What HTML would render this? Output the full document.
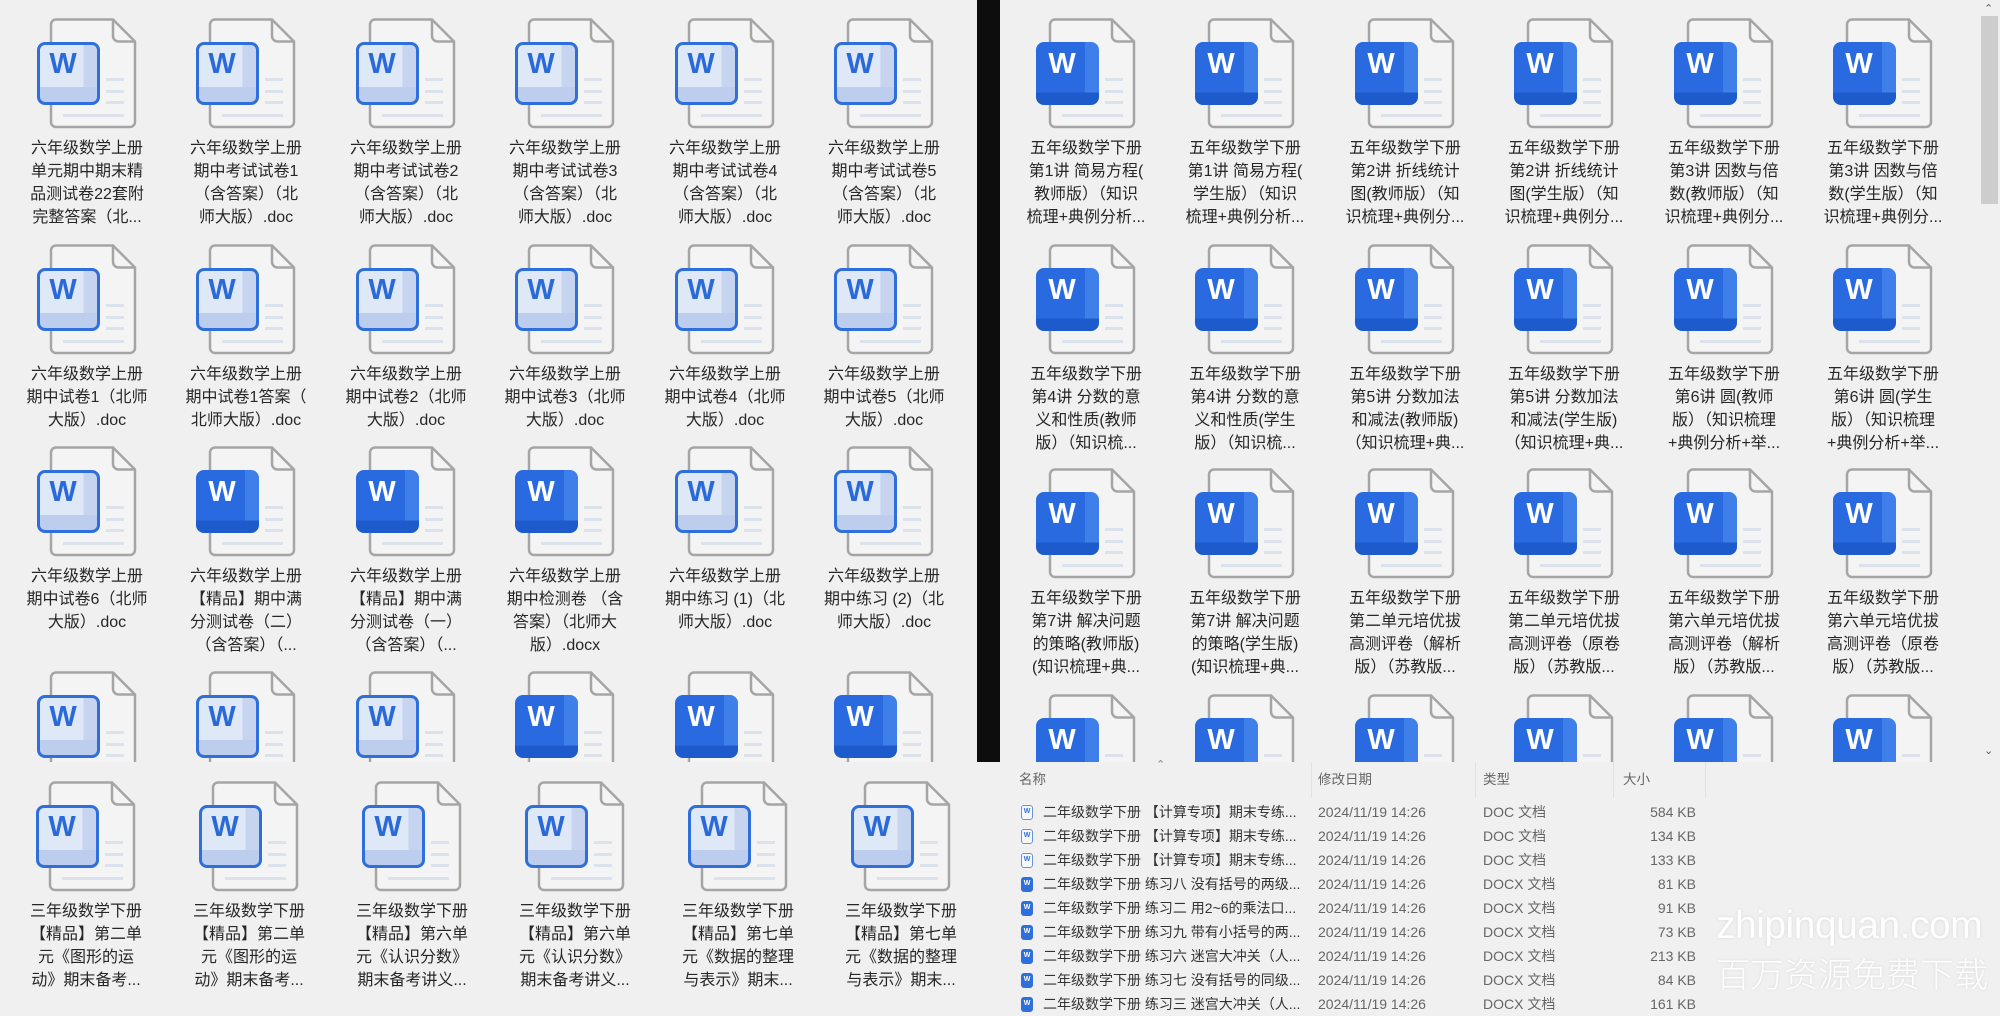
<!DOCTYPE html>
<html><head><meta charset="utf-8">
<style>
*{margin:0;padding:0;box-sizing:border-box}
body{width:2000px;height:1000px;overflow:hidden;background:#f0f0f0;font-family:"Liberation Sans","Noto Sans CJK SC",sans-serif;position:relative}
.p{position:absolute;overflow:hidden;background:#f0f0f0}
.it{position:absolute;width:160px;height:230px}
.ic{position:absolute;left:30px;top:0;width:100px;height:112px}
.ic svg{position:absolute;left:0;top:0}
.sq{position:absolute;left:0;top:24px;width:63px;height:63px;border-radius:8px;overflow:hidden}
.sq b{position:absolute;left:0;top:6px;width:52px;text-align:center;font:bold 29px "Liberation Sans",sans-serif}
.L{border:3px solid #2e6fdc;background:linear-gradient(to bottom,rgba(0,0,0,0) 74%,#bccdee 74%),linear-gradient(to right,#dfe8f7 76%,#c6d4f0 76%)}
.L b{color:#2a6ad8;top:3px;left:-3px}
.S{background:linear-gradient(to bottom,rgba(0,0,0,0) 80%,#1d5bcc 80%),linear-gradient(to right,#2a6ae0 78%,#3f7fe9 78%)}
.S b{color:#fff}
.t{position:absolute;left:0;top:119px;width:160px;text-align:center;font-size:16px;line-height:23px;color:#262626;white-space:nowrap;font-family:"Liberation Sans","Noto Sans CJK SC",sans-serif}
.hd{position:absolute;top:768px;font-size:13.5px;color:#666;font-family:"Liberation Sans","Noto Sans CJK SC",sans-serif}
.sep{position:absolute;top:762px;width:1px;height:36px;background:#e2e2e2}
.r{position:absolute;left:1000px;width:720px;height:24px;font-size:14px;line-height:24px;color:#333;font-family:"Liberation Sans","Noto Sans CJK SC",sans-serif}
.r span{position:absolute;white-space:nowrap}
.r .n{left:43px}.r .d{left:318px;color:#666}.r .y{left:483px;color:#666}.r .z{right:24px;color:#666;text-align:right}
.si{position:absolute;left:21px;top:5px;width:12px;height:15px;border:1.5px solid #6b93d8;border-radius:3px;background:#f6f8fc;font:bold 7px/12px "Liberation Sans",sans-serif;color:#2e6fdc;text-align:center;font-style:normal}
.si.x{background:#2e6fdc;border-color:#2e6fdc;color:#fff}
</style></head><body>
<svg width="0" height="0" style="position:absolute"><defs><symbol id="dc" viewBox="0 0 100 112"><path d="M19 1.5H76L98 23.5V104a5 5 0 0 1-5 5H19a5 5 0 0 1-5-5V6.5a5 5 0 0 1 5-5Z" fill="#f4f4f4" stroke="#a5a5a5" stroke-width="2.5"/><path d="M76 1.5V18a5.5 5.5 0 0 0 5.5 5.5H98" fill="none" stroke="#a5a5a5" stroke-width="2.5"/><rect x="69" y="60" width="18" height="3" fill="#dce2ec"/><rect x="69" y="72" width="18" height="3" fill="#dce2ec"/><rect x="69" y="83" width="18" height="3" fill="#dce2ec"/><rect x="26" y="96" width="61" height="3" fill="#dce2ec"/></symbol></defs></svg>

<!-- LEFT TOP PANEL -->
<div class="p" style="left:0;top:0;width:977px;height:762px">
<div class="it" style="left:7px;top:18px"><div class="ic"><svg width="100" height="112"><use href="#dc"/></svg><div class="sq L"><b>W</b></div></div><div class="t">六年级数学上册<br>单元期中期末精<br>品测试卷22套附<br>完整答案（北...</div></div>
<div class="it" style="left:166px;top:18px"><div class="ic"><svg width="100" height="112"><use href="#dc"/></svg><div class="sq L"><b>W</b></div></div><div class="t">六年级数学上册<br>期中考试试卷1<br>（含答案）（北<br>师大版）.doc</div></div>
<div class="it" style="left:326px;top:18px"><div class="ic"><svg width="100" height="112"><use href="#dc"/></svg><div class="sq L"><b>W</b></div></div><div class="t">六年级数学上册<br>期中考试试卷2<br>（含答案）（北<br>师大版）.doc</div></div>
<div class="it" style="left:485px;top:18px"><div class="ic"><svg width="100" height="112"><use href="#dc"/></svg><div class="sq L"><b>W</b></div></div><div class="t">六年级数学上册<br>期中考试试卷3<br>（含答案）（北<br>师大版）.doc</div></div>
<div class="it" style="left:645px;top:18px"><div class="ic"><svg width="100" height="112"><use href="#dc"/></svg><div class="sq L"><b>W</b></div></div><div class="t">六年级数学上册<br>期中考试试卷4<br>（含答案）（北<br>师大版）.doc</div></div>
<div class="it" style="left:804px;top:18px"><div class="ic"><svg width="100" height="112"><use href="#dc"/></svg><div class="sq L"><b>W</b></div></div><div class="t">六年级数学上册<br>期中考试试卷5<br>（含答案）（北<br>师大版）.doc</div></div>
<div class="it" style="left:7px;top:244px"><div class="ic"><svg width="100" height="112"><use href="#dc"/></svg><div class="sq L"><b>W</b></div></div><div class="t">六年级数学上册<br>期中试卷1（北师<br>大版）.doc</div></div>
<div class="it" style="left:166px;top:244px"><div class="ic"><svg width="100" height="112"><use href="#dc"/></svg><div class="sq L"><b>W</b></div></div><div class="t">六年级数学上册<br>期中试卷1答案（<br>北师大版）.doc</div></div>
<div class="it" style="left:326px;top:244px"><div class="ic"><svg width="100" height="112"><use href="#dc"/></svg><div class="sq L"><b>W</b></div></div><div class="t">六年级数学上册<br>期中试卷2（北师<br>大版）.doc</div></div>
<div class="it" style="left:485px;top:244px"><div class="ic"><svg width="100" height="112"><use href="#dc"/></svg><div class="sq L"><b>W</b></div></div><div class="t">六年级数学上册<br>期中试卷3（北师<br>大版）.doc</div></div>
<div class="it" style="left:645px;top:244px"><div class="ic"><svg width="100" height="112"><use href="#dc"/></svg><div class="sq L"><b>W</b></div></div><div class="t">六年级数学上册<br>期中试卷4（北师<br>大版）.doc</div></div>
<div class="it" style="left:804px;top:244px"><div class="ic"><svg width="100" height="112"><use href="#dc"/></svg><div class="sq L"><b>W</b></div></div><div class="t">六年级数学上册<br>期中试卷5（北师<br>大版）.doc</div></div>
<div class="it" style="left:7px;top:446px"><div class="ic"><svg width="100" height="112"><use href="#dc"/></svg><div class="sq L"><b>W</b></div></div><div class="t">六年级数学上册<br>期中试卷6（北师<br>大版）.doc</div></div>
<div class="it" style="left:166px;top:446px"><div class="ic"><svg width="100" height="112"><use href="#dc"/></svg><div class="sq S"><b>W</b></div></div><div class="t">六年级数学上册<br>【精品】期中满<br>分测试卷（二）<br>（含答案）（...</div></div>
<div class="it" style="left:326px;top:446px"><div class="ic"><svg width="100" height="112"><use href="#dc"/></svg><div class="sq S"><b>W</b></div></div><div class="t">六年级数学上册<br>【精品】期中满<br>分测试卷（一）<br>（含答案）（...</div></div>
<div class="it" style="left:485px;top:446px"><div class="ic"><svg width="100" height="112"><use href="#dc"/></svg><div class="sq S"><b>W</b></div></div><div class="t">六年级数学上册<br>期中检测卷 （含<br>答案）（北师大<br>版）.docx</div></div>
<div class="it" style="left:645px;top:446px"><div class="ic"><svg width="100" height="112"><use href="#dc"/></svg><div class="sq L"><b>W</b></div></div><div class="t">六年级数学上册<br>期中练习 (1)（北<br>师大版）.doc</div></div>
<div class="it" style="left:804px;top:446px"><div class="ic"><svg width="100" height="112"><use href="#dc"/></svg><div class="sq L"><b>W</b></div></div><div class="t">六年级数学上册<br>期中练习 (2)（北<br>师大版）.doc</div></div>
<div class="it" style="left:7px;top:671px"><div class="ic"><svg width="100" height="112"><use href="#dc"/></svg><div class="sq L"><b>W</b></div></div></div>
<div class="it" style="left:166px;top:671px"><div class="ic"><svg width="100" height="112"><use href="#dc"/></svg><div class="sq L"><b>W</b></div></div></div>
<div class="it" style="left:326px;top:671px"><div class="ic"><svg width="100" height="112"><use href="#dc"/></svg><div class="sq L"><b>W</b></div></div></div>
<div class="it" style="left:485px;top:671px"><div class="ic"><svg width="100" height="112"><use href="#dc"/></svg><div class="sq S"><b>W</b></div></div></div>
<div class="it" style="left:645px;top:671px"><div class="ic"><svg width="100" height="112"><use href="#dc"/></svg><div class="sq S"><b>W</b></div></div></div>
<div class="it" style="left:804px;top:671px"><div class="ic"><svg width="100" height="112"><use href="#dc"/></svg><div class="sq S"><b>W</b></div></div></div>
</div>

<div style="position:absolute;left:977px;top:0;width:23px;height:762px;background:#0d0d0d"></div>

<!-- RIGHT TOP PANEL -->
<div class="p" style="left:1000px;top:0;width:1000px;height:762px">
<div class="it" style="left:6px;top:18px"><div class="ic"><svg width="100" height="112"><use href="#dc"/></svg><div class="sq S"><b>W</b></div></div><div class="t">五年级数学下册<br>第1讲 简易方程(<br>教师版）（知识<br>梳理+典例分析...</div></div>
<div class="it" style="left:165px;top:18px"><div class="ic"><svg width="100" height="112"><use href="#dc"/></svg><div class="sq S"><b>W</b></div></div><div class="t">五年级数学下册<br>第1讲 简易方程(<br>学生版）（知识<br>梳理+典例分析...</div></div>
<div class="it" style="left:325px;top:18px"><div class="ic"><svg width="100" height="112"><use href="#dc"/></svg><div class="sq S"><b>W</b></div></div><div class="t">五年级数学下册<br>第2讲 折线统计<br>图(教师版）（知<br>识梳理+典例分...</div></div>
<div class="it" style="left:484px;top:18px"><div class="ic"><svg width="100" height="112"><use href="#dc"/></svg><div class="sq S"><b>W</b></div></div><div class="t">五年级数学下册<br>第2讲 折线统计<br>图(学生版）（知<br>识梳理+典例分...</div></div>
<div class="it" style="left:644px;top:18px"><div class="ic"><svg width="100" height="112"><use href="#dc"/></svg><div class="sq S"><b>W</b></div></div><div class="t">五年级数学下册<br>第3讲 因数与倍<br>数(教师版）（知<br>识梳理+典例分...</div></div>
<div class="it" style="left:803px;top:18px"><div class="ic"><svg width="100" height="112"><use href="#dc"/></svg><div class="sq S"><b>W</b></div></div><div class="t">五年级数学下册<br>第3讲 因数与倍<br>数(学生版）（知<br>识梳理+典例分...</div></div>
<div class="it" style="left:6px;top:244px"><div class="ic"><svg width="100" height="112"><use href="#dc"/></svg><div class="sq S"><b>W</b></div></div><div class="t">五年级数学下册<br>第4讲 分数的意<br>义和性质(教师<br>版）（知识梳...</div></div>
<div class="it" style="left:165px;top:244px"><div class="ic"><svg width="100" height="112"><use href="#dc"/></svg><div class="sq S"><b>W</b></div></div><div class="t">五年级数学下册<br>第4讲 分数的意<br>义和性质(学生<br>版）（知识梳...</div></div>
<div class="it" style="left:325px;top:244px"><div class="ic"><svg width="100" height="112"><use href="#dc"/></svg><div class="sq S"><b>W</b></div></div><div class="t">五年级数学下册<br>第5讲 分数加法<br>和减法(教师版)<br>（知识梳理+典...</div></div>
<div class="it" style="left:484px;top:244px"><div class="ic"><svg width="100" height="112"><use href="#dc"/></svg><div class="sq S"><b>W</b></div></div><div class="t">五年级数学下册<br>第5讲 分数加法<br>和减法(学生版)<br>（知识梳理+典...</div></div>
<div class="it" style="left:644px;top:244px"><div class="ic"><svg width="100" height="112"><use href="#dc"/></svg><div class="sq S"><b>W</b></div></div><div class="t">五年级数学下册<br>第6讲 圆(教师<br>版）（知识梳理<br>+典例分析+举...</div></div>
<div class="it" style="left:803px;top:244px"><div class="ic"><svg width="100" height="112"><use href="#dc"/></svg><div class="sq S"><b>W</b></div></div><div class="t">五年级数学下册<br>第6讲 圆(学生<br>版）（知识梳理<br>+典例分析+举...</div></div>
<div class="it" style="left:6px;top:468px"><div class="ic"><svg width="100" height="112"><use href="#dc"/></svg><div class="sq S"><b>W</b></div></div><div class="t">五年级数学下册<br>第7讲 解决问题<br>的策略(教师版)<br>(知识梳理+典...</div></div>
<div class="it" style="left:165px;top:468px"><div class="ic"><svg width="100" height="112"><use href="#dc"/></svg><div class="sq S"><b>W</b></div></div><div class="t">五年级数学下册<br>第7讲 解决问题<br>的策略(学生版)<br>(知识梳理+典...</div></div>
<div class="it" style="left:325px;top:468px"><div class="ic"><svg width="100" height="112"><use href="#dc"/></svg><div class="sq S"><b>W</b></div></div><div class="t">五年级数学下册<br>第二单元培优拔<br>高测评卷（解析<br>版）（苏教版...</div></div>
<div class="it" style="left:484px;top:468px"><div class="ic"><svg width="100" height="112"><use href="#dc"/></svg><div class="sq S"><b>W</b></div></div><div class="t">五年级数学下册<br>第二单元培优拔<br>高测评卷（原卷<br>版）（苏教版...</div></div>
<div class="it" style="left:644px;top:468px"><div class="ic"><svg width="100" height="112"><use href="#dc"/></svg><div class="sq S"><b>W</b></div></div><div class="t">五年级数学下册<br>第六单元培优拔<br>高测评卷（解析<br>版）（苏教版...</div></div>
<div class="it" style="left:803px;top:468px"><div class="ic"><svg width="100" height="112"><use href="#dc"/></svg><div class="sq S"><b>W</b></div></div><div class="t">五年级数学下册<br>第六单元培优拔<br>高测评卷（原卷<br>版）（苏教版...</div></div>
<div class="it" style="left:6px;top:694px"><div class="ic"><svg width="100" height="112"><use href="#dc"/></svg><div class="sq S"><b>W</b></div></div></div>
<div class="it" style="left:165px;top:694px"><div class="ic"><svg width="100" height="112"><use href="#dc"/></svg><div class="sq S"><b>W</b></div></div></div>
<div class="it" style="left:325px;top:694px"><div class="ic"><svg width="100" height="112"><use href="#dc"/></svg><div class="sq S"><b>W</b></div></div></div>
<div class="it" style="left:484px;top:694px"><div class="ic"><svg width="100" height="112"><use href="#dc"/></svg><div class="sq S"><b>W</b></div></div></div>
<div class="it" style="left:644px;top:694px"><div class="ic"><svg width="100" height="112"><use href="#dc"/></svg><div class="sq S"><b>W</b></div></div></div>
<div class="it" style="left:803px;top:694px"><div class="ic"><svg width="100" height="112"><use href="#dc"/></svg><div class="sq S"><b>W</b></div></div></div>
<div style="position:absolute;left:979px;top:0;width:21px;height:762px;background:#f0f0f0"></div>
<div style="position:absolute;left:981px;top:16px;width:17px;height:188px;background:#cdcdcd"></div>
<div style="position:absolute;left:984px;top:2px;font-size:11px;color:#606060">&#8963;</div>
<div style="position:absolute;left:984px;top:744px;font-size:11px;color:#606060">&#8964;</div>
</div>

<!-- BOTTOM LEFT -->
<div class="p" style="left:0;top:762px;width:1000px;height:238px">
<div class="it" style="left:6px;top:19px"><div class="ic"><svg width="100" height="112"><use href="#dc"/></svg><div class="sq L"><b>W</b></div></div><div class="t">三年级数学下册<br>【精品】第二单<br>元《图形的运<br>动》期末备考...</div></div>
<div class="it" style="left:169px;top:19px"><div class="ic"><svg width="100" height="112"><use href="#dc"/></svg><div class="sq L"><b>W</b></div></div><div class="t">三年级数学下册<br>【精品】第二单<br>元《图形的运<br>动》期末备考...</div></div>
<div class="it" style="left:332px;top:19px"><div class="ic"><svg width="100" height="112"><use href="#dc"/></svg><div class="sq L"><b>W</b></div></div><div class="t">三年级数学下册<br>【精品】第六单<br>元《认识分数》<br>期末备考讲义...</div></div>
<div class="it" style="left:495px;top:19px"><div class="ic"><svg width="100" height="112"><use href="#dc"/></svg><div class="sq L"><b>W</b></div></div><div class="t">三年级数学下册<br>【精品】第六单<br>元《认识分数》<br>期末备考讲义...</div></div>
<div class="it" style="left:658px;top:19px"><div class="ic"><svg width="100" height="112"><use href="#dc"/></svg><div class="sq L"><b>W</b></div></div><div class="t">三年级数学下册<br>【精品】第七单<br>元《数据的整理<br>与表示》期末...</div></div>
<div class="it" style="left:821px;top:19px"><div class="ic"><svg width="100" height="112"><use href="#dc"/></svg><div class="sq L"><b>W</b></div></div><div class="t">三年级数学下册<br>【精品】第七单<br>元《数据的整理<br>与表示》期末...</div></div>
</div>

<!-- BOTTOM RIGHT LIST -->
<div class="p" style="left:1000px;top:762px;width:1000px;height:238px"></div>
<div style="position:absolute;left:1156px;top:758px;font-size:11px;color:#888">&#8963;</div>
<div class="hd" style="left:1019px">名称</div>
<div class="hd" style="left:1318px">修改日期</div>
<div class="hd" style="left:1483px">类型</div>
<div class="hd" style="left:1623px">大小</div>
<div class="sep" style="left:1311px"></div><div class="sep" style="left:1475px"></div><div class="sep" style="left:1613px"></div><div class="sep" style="left:1705px"></div>

<div class="r" style="top:800px"><i class="si">W</i><span class="n">二年级数学下册 【计算专项】期末专练...</span><span class="d">2024/11/19 14:26</span><span class="y">DOC 文档</span><span class="z">584 KB</span></div>
<div class="r" style="top:824px"><i class="si">W</i><span class="n">二年级数学下册 【计算专项】期末专练...</span><span class="d">2024/11/19 14:26</span><span class="y">DOC 文档</span><span class="z">134 KB</span></div>
<div class="r" style="top:848px"><i class="si">W</i><span class="n">二年级数学下册 【计算专项】期末专练...</span><span class="d">2024/11/19 14:26</span><span class="y">DOC 文档</span><span class="z">133 KB</span></div>
<div class="r" style="top:872px"><i class="si x">W</i><span class="n">二年级数学下册 练习八 没有括号的两级...</span><span class="d">2024/11/19 14:26</span><span class="y">DOCX 文档</span><span class="z">81 KB</span></div>
<div class="r" style="top:896px"><i class="si x">W</i><span class="n">二年级数学下册 练习二 用2~6的乘法口...</span><span class="d">2024/11/19 14:26</span><span class="y">DOCX 文档</span><span class="z">91 KB</span></div>
<div class="r" style="top:920px"><i class="si x">W</i><span class="n">二年级数学下册 练习九 带有小括号的两...</span><span class="d">2024/11/19 14:26</span><span class="y">DOCX 文档</span><span class="z">73 KB</span></div>
<div class="r" style="top:944px"><i class="si x">W</i><span class="n">二年级数学下册 练习六 迷宫大冲关（人...</span><span class="d">2024/11/19 14:26</span><span class="y">DOCX 文档</span><span class="z">213 KB</span></div>
<div class="r" style="top:968px"><i class="si x">W</i><span class="n">二年级数学下册 练习七 没有括号的同级...</span><span class="d">2024/11/19 14:26</span><span class="y">DOCX 文档</span><span class="z">84 KB</span></div>
<div class="r" style="top:992px"><i class="si x">W</i><span class="n">二年级数学下册 练习三 迷宫大冲关（人...</span><span class="d">2024/11/19 14:26</span><span class="y">DOCX 文档</span><span class="z">161 KB</span></div>

<div style="position:absolute;left:1716px;top:903px;font-size:39px;line-height:46px;color:rgba(255,255,255,0.95);font-family:'Liberation Sans',sans-serif;letter-spacing:-0.5px;white-space:nowrap;text-shadow:0 0 3px rgba(0,0,0,0.1)">zhipinquan.com</div>
<div style="position:absolute;left:1716px;top:951px;font-size:34px;line-height:44px;color:rgba(255,255,255,0.95);font-family:'Noto Sans CJK SC',sans-serif;font-weight:300;white-space:nowrap;text-shadow:0 0 3px rgba(0,0,0,0.1)">百万资源免费下载</div>
</body></html>
